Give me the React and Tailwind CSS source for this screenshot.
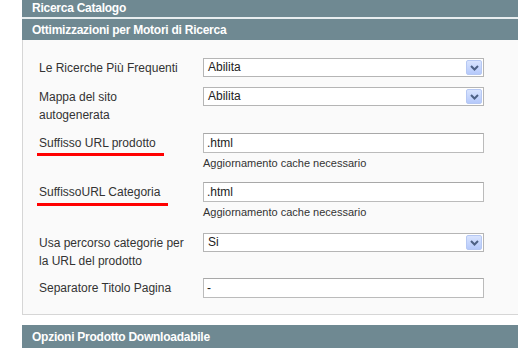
import React from "react";

function Arrow() {
  return (
    <div className="absolute right-[1px] top-[1px] bottom-[1px] w-[16px] flex items-center justify-center rounded-[2px] border border-[#b6c8f3] bg-gradient-to-b from-[#d9e4fe] to-[#b5c9fb]">
      <svg width="9" height="6" viewBox="0 0 9 6">
        <path d="M1 1 L4.5 4.5 L8 1" stroke="#4d6185" strokeWidth="2" fill="none" />
      </svg>
    </div>
  );
}

function Select({ value }) {
  return (
    <div className="relative w-[281px] h-[19px] bg-white border border-[#b5b5b5] pl-[4px] text-[12px] leading-[17px] text-[#222]">
      {value}
      <Arrow />
    </div>
  );
}

function Input({ value }) {
  return (
    <div className="w-[281px] h-[20px] bg-white border border-[#bbbbbb] border-t-[#a8a8a8] pl-[3px] text-[12px] leading-[18px] text-[#222]">
      {value}
    </div>
  );
}

function Row({ label, children, underline, mt }) {
  return (
    <div className={`flex ${mt}`}>
      <div className="w-[164px] pt-[1px] pr-[8px] text-[12px] leading-[18px] text-[#333]">
        {label}
        {underline && <div className={`h-[3px] bg-[#ff0000] -ml-[2px] ${underline}`} />}
      </div>
      <div className="flex flex-col">{children}</div>
    </div>
  );
}

function Note() {
  return <div className="text-[11px] leading-[14px] text-[#333] mt-[3px]">Aggiornamento cache necessario</div>;
}

export default function App() {
  return (
    <div className="w-[518px] h-[348px] bg-white overflow-hidden pl-[22px]" style={{ fontFamily: '"Liberation Sans", Arial, sans-serif' }}>
      <div className="h-[17px] bg-[#6f8992] pl-[10px] text-white font-bold text-[12px] leading-[17px] tracking-[-0.25px]">Ricerca Catalogo</div>
      <div className="h-[2px] bg-[#e8eef0]" />
      <div className="h-[21px] bg-[#6f8992] pl-[10px] text-white font-bold text-[12px] leading-[22px] tracking-[-0.25px]">Ottimizzazioni per Motori di Ricerca</div>
      <div className="bg-[#fafafa] border-l border-b border-[#d6d6d6] pl-[16px] pt-[18px] pb-[16px]">
        <Row label="Le Ricerche Più Frequenti" mt="">
          <Select value="Abilita" />
        </Row>
        <Row label={<>Mappa del sito<br />autogenerata</>} mt="mt-[10px]">
          <Select value="Abilita" />
        </Row>
        <Row label="Suffisso URL prodotto" underline="w-[127px] mt-[1px]" mt="mt-[9px]">
          <Input value=".html" />
          <Note />
        </Row>
        <Row label="SuffissoURL Categoria" underline="w-[131px] mt-[2px]" mt="mt-[12px]">
          <Input value=".html" />
          <Note />
        </Row>
        <Row label={<>Usa percorso categorie per<br />la URL del prodotto</>} mt="mt-[14px]">
          <Select value="Si" />
        </Row>
        <Row label="Separatore Titolo Pagina" mt="mt-[8px]">
          <Input value="-" />
        </Row>
      </div>
      <div className="h-[10px]" />
      <div className="h-[23px] bg-[#6f8992] pl-[10px] text-white font-bold text-[12px] leading-[24px] tracking-[-0.25px]">Opzioni Prodotto Downloadabile</div>
    </div>
  );
}
